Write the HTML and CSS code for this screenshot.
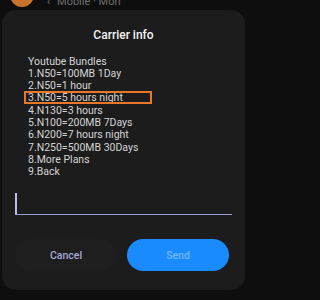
FILE: index.html
```html
<!DOCTYPE html>
<html>
<head>
<meta charset="utf-8">
<link rel="stylesheet" href="styles.css">
</head>
<body>
<div class="top">
  <div class="avatar"></div>
  <div class="crumb"><span class="chev">&lsaquo;</span> Mobile · Mon</div>
</div>
<div class="dialog">
  <div class="title">Carrier info</div>
  <div class="menu">
    <div class="line">Youtube Bundles</div>
    <div class="line">1.N50=100MB 1Day</div>
    <div class="line">2.N50=1 hour</div>
    <div class="line marked">3.N50=5 hours night</div>
    <div class="line">4.N130=3 hours</div>
    <div class="line">5.N100=200MB 7Days</div>
    <div class="line">6.N200=7 hours night</div>
    <div class="line">7.N250=500MB 30Days</div>
    <div class="line">8.More Plans</div>
    <div class="line">9.Back</div>
  </div>
  <div class="field"><span class="cursor"></span></div>
  <div class="actions">
    <div class="btn cancel">Cancel</div>
    <div class="btn send">Send</div>
  </div>
</div>
</body>
</html>
```
FILE: styles.css
```css
html {
  background: #0e0e0e;
}
body {
  margin: 0;
  padding: 0;
  background: #0e0e0e;
  font-family: Roboto, "Liberation Sans", sans-serif;
  width: 247px;
  height: 300px;
  overflow: hidden;
}
.top {
  height: 10px;
  display: flex;
  align-items: flex-end;
  padding-left: 10px;
  overflow: hidden;
}
.avatar {
  width: 24px;
  height: 24px;
  flex: none;
  border-radius: 50%;
  background: #c9742e;
  margin-bottom: 3px;
}
.crumb {
  margin-left: 13px;
  color: #6f6f6f;
  font-size: 11px;
  line-height: 12px;
  margin-bottom: 2px;
  white-space: nowrap;
}
.chev {
  margin-right: 4px;
}
.dialog {
  margin: 0 2px;
  height: 280px;
  box-sizing: border-box;
  background: #1c1c1c;
  border-radius: 14px;
  padding: 17px 13px 0 13px;
}
.title {
  text-align: center;
  color: #f2f2f2;
  font-size: 12px;
  font-weight: 500;
  line-height: 16px;
}
.menu {
  margin-top: 12.5px;
  padding-left: 13px;
  color: #d4d4d4;
  font-size: 10.5px;
  line-height: 12.3px;
}
.line {
  white-space: nowrap;
}
.marked {
  position: relative;
}
.marked::after {
  content: "";
  position: absolute;
  left: -4.5px;
  top: -1.5px;
  width: 124px;
  height: 9px;
  border: 2px solid #e8762b;
}
.field {
  margin-top: 15px;
  height: 21px;
  border-bottom: 1.5px solid #9ea1d2;
  display: flex;
}
.cursor {
  width: 1.5px;
  height: 21px;
  background: #b9bce6;
}
.actions {
  margin-top: 24px;
  padding-right: 3px;
  display: grid;
  grid-template-columns: 1fr 1fr;
  gap: 10px;
}
.btn {
  height: 32px;
  border-radius: 16px;
  display: flex;
  align-items: center;
  justify-content: center;
  font-size: 10.5px;
  font-weight: 500;
}
.cancel {
  background: #1e1e1e;
  color: #a7aad8;
}
.send {
  background: #1a8aff;
  color: #72b6ff;
}
```
